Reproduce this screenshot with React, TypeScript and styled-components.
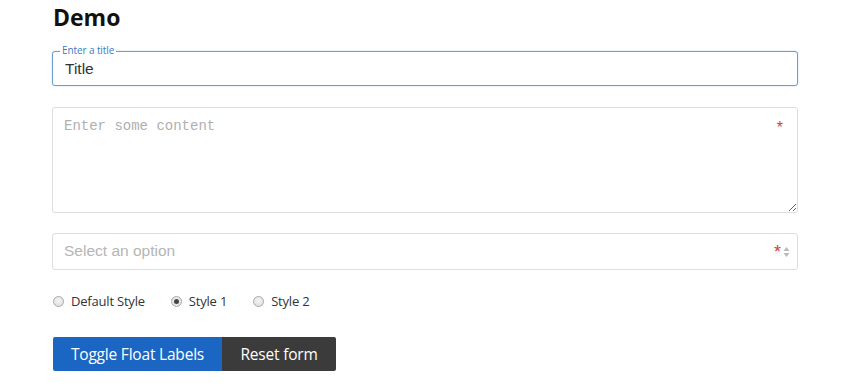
import React from "react";
import styled, { createGlobalStyle } from "styled-components";

const Global = createGlobalStyle`
  html, body { margin: 0; padding: 0; background: #fff; }
  body { font-family: "Open Sans", Arial, sans-serif; color: #333; }
  * { box-sizing: border-box; }
`;

const Page = styled.div`
  width: 850px;
  padding: 0 52px;
  display: flex;
  flex-direction: column;
`;

const Heading = styled.h1`
  margin: 0;
  font-family: "Open Sans", sans-serif;
  font-weight: 700;
  font-size: 23px;
  line-height: 34px;
  color: #111;
  padding-left: 1px;
`;

const Field = styled.div<{ $mt: number }>`
  position: relative;
  margin-top: ${(p) => p.$mt}px;
`;

const FloatLabel = styled.label`
  position: absolute;
  left: 8px;
  top: -7px;
  padding: 0 2px;
  background: #fff;
  font-family: "Open Sans", sans-serif;
  font-size: 10px;
  line-height: 12px;
  color: #3d7ac2;
  letter-spacing: -0.1px;
`;

const TextInput = styled.input`
  display: block;
  width: 100%;
  height: 35px;
  border: 1px solid #6c9cd0;
  border-radius: 3px;
  box-shadow: 0 0 2px rgba(80, 140, 210, 0.35);
  padding: 0 12px 0;
  font-family: "Liberation Sans", Arial, sans-serif;
  font-size: 15.5px;
  color: #333;
  outline: none;
`;

const TextArea = styled.textarea`
  display: block;
  width: 100%;
  height: 106px;
  border: 1px solid #dddddd;
  border-radius: 3px;
  padding: 10px 11px;
  font-family: "Liberation Mono", monospace;
  font-size: 14px;
  line-height: 16px;
  color: #333;
  outline: none;
  resize: vertical;
  &::placeholder { color: #b0b0b0; }
`;

const Required = styled.span<{ $top: number; $size: number }>`
  position: absolute;
  right: 15px;
  top: ${(p) => p.$top}px;
  font-family: "Liberation Sans", Arial, sans-serif;
  font-size: ${(p) => p.$size}px;
  line-height: 1;
  color: #d33c3c;
`;

const SelectBox = styled.div`
  display: flex;
  align-items: center;
  height: 37px;
  border: 1px solid #dddddd;
  border-radius: 3px;
  padding: 0 7px 2px 11px;
  font-family: "Liberation Sans", Arial, sans-serif;
  font-size: 15.5px;
  color: #b5b5b5;
`;

const SelectText = styled.span`
  flex: 1;
`;

const SelectStar = styled.span`
  color: #d33c3c;
  font-size: 18px;
  margin-right: 2px;
  margin-top: 4px;
`;

const Arrows = styled.svg`
  display: block;
  margin-top: 2px;
`;

const RadioRow = styled.div`
  display: flex;
  align-items: center;
  margin-top: 22px;
  gap: 26px;
  padding-left: 1px;
`;

const RadioLabel = styled.label`
  display: flex;
  align-items: center;
  gap: 7px;
  font-family: "Open Sans", sans-serif;
  font-size: 13px;
  color: #333;
  letter-spacing: -0.2px;
`;

const RadioDot = styled.span<{ $checked?: boolean }>`
  width: 11px;
  height: 11px;
  border-radius: 50%;
  border: 1px solid #a9a9a9;
  background: radial-gradient(circle at 50% 40%, #f4f4f4 0%, #dcdcdc 100%);
  display: inline-flex;
  align-items: center;
  justify-content: center;
  &::after {
    content: "";
    width: 5px;
    height: 5px;
    border-radius: 50%;
    background: ${(p) => (p.$checked ? "#444" : "transparent")};
  }
`;

const ButtonRow = styled.div`
  display: flex;
  margin-top: 27px;
  padding-left: 1px;
`;

const Button = styled.button<{ $dark?: boolean; $w: number }>`
  width: ${(p) => p.$w}px;
  height: 34px;
  border: none;
  background: ${(p) => (p.$dark ? "#3c3b3b" : "#1a66c2")};
  color: #fff;
  font-family: "Open Sans", sans-serif;
  font-size: 15.5px;
  letter-spacing: -0.2px;
  border-radius: ${(p) => (p.$dark ? "0 2px 2px 0" : "2px 0 0 2px")};
  padding: 0;
`;

export default function App() {
  return (
    <>
      <Global />
      <Page>
        <Heading>Demo</Heading>
        <Field $mt={17}>
          <FloatLabel>Enter a title</FloatLabel>
          <TextInput defaultValue="Title" />
        </Field>
        <Field $mt={21}>
          <TextArea placeholder="Enter some content" />
          <Required $top={13} $size={16}>*</Required>
        </Field>
        <Field $mt={20}>
          <SelectBox>
            <SelectText>Select an option</SelectText>
            <SelectStar>*</SelectStar>
            <Arrows width="7" height="12" viewBox="0 0 7 12">
              <path d="M3.5 1 L6.5 5 L0.5 5 Z" fill="#b9b9b9" />
              <path d="M3.5 11 L6.5 7 L0.5 7 Z" fill="#b9b9b9" />
            </Arrows>
          </SelectBox>
        </Field>
        <RadioRow>
          <RadioLabel><RadioDot />Default Style</RadioLabel>
          <RadioLabel><RadioDot $checked />Style 1</RadioLabel>
          <RadioLabel><RadioDot />Style 2</RadioLabel>
        </RadioRow>
        <ButtonRow>
          <Button $w={169}>Toggle Float Labels</Button>
          <Button $dark $w={114}>Reset form</Button>
        </ButtonRow>
      </Page>
    </>
  );
}
